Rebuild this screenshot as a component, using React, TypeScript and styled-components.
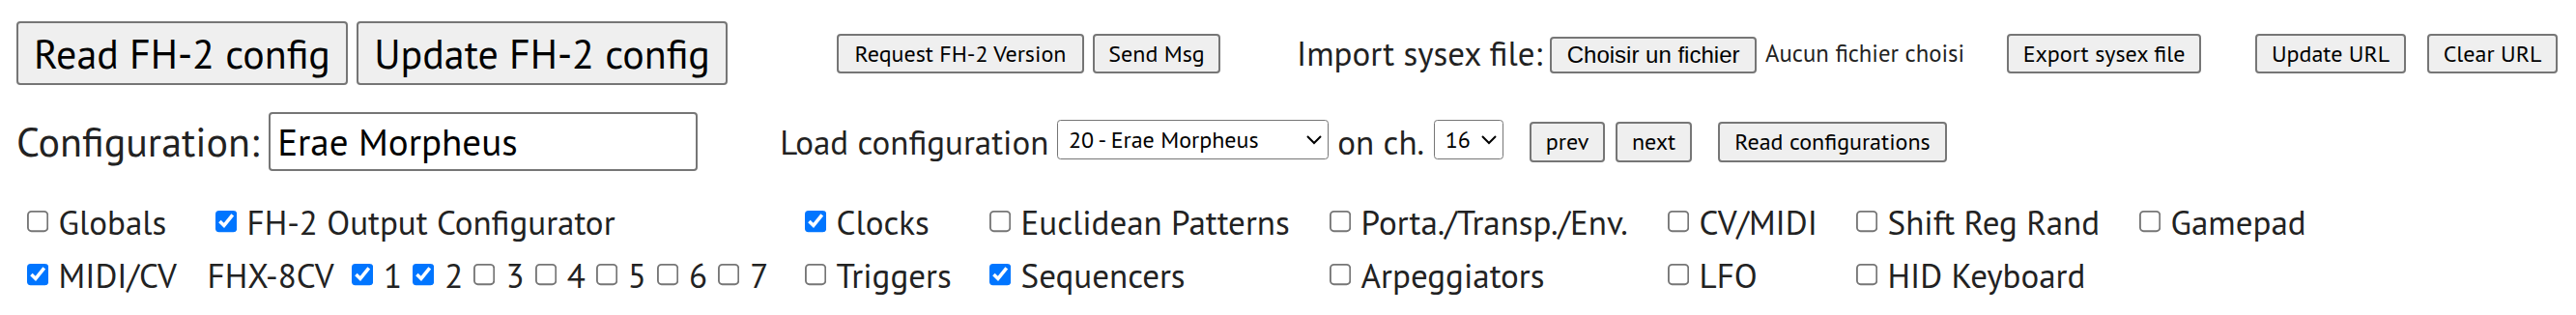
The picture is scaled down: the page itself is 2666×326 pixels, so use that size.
import React from 'react'
import styled, { createGlobalStyle } from 'styled-components'

const Global = createGlobalStyle`
body {
  margin: 0;
  background: #fff;
  color: #222;
  font-family: "PT Sans", Lato, sans-serif;
}
`
const Page = styled.div`
display: flex;
flex-direction: column;
padding: 22px 0 0 17px;
`
const Row = styled.div<{ $h: number; $mt?: number }>`
display: flex;
align-items: center;
height: ${(p) => p.$h}px;
margin-top: ${(p) => p.$mt ?? 0}px;
white-space: nowrap;
`
const Btn = styled.button<{ $w: number; $h: number; $fs: number; $ml?: number }>`
box-sizing: border-box;
flex: none;
width: ${(p) => p.$w}px;
height: ${(p) => p.$h}px;
margin: 0 0 0 ${(p) => p.$ml ?? 0}px;
padding: 0;
font-family: "PT Sans", Lato, sans-serif;
font-size: ${(p) => p.$fs}px;
color: #000;
background: #efefef;
border: 2px solid #767676;
border-radius: 4px;
`
const FileBtn = styled(Btn)`
font-family: "Liberation Sans", Arial, sans-serif;
margin-top: 4px;
`
const Text = styled.span<{ $fs: number; $ml?: number }>`
flex: none;
font-size: ${(p) => p.$fs}px;
margin-left: ${(p) => p.$ml ?? 0}px;
`
const NameInput = styled.input`
box-sizing: border-box;
flex: none;
width: 444px;
height: 61px;
margin-left: 10px;
padding: 0 7px;
font-family: "PT Sans", Lato, sans-serif;
font-size: 39px;
color: #000;
background: #fff;
border: 2px solid #767676;
border-radius: 4px;
`
// native select drawn at the page's 1.8 zoom so the arrow scales with it
const Select = styled.select<{ $w: number; $ml: number }>`
zoom: 1.8;
box-sizing: border-box;
flex: none;
width: ${(p) => p.$w / 1.8}px;
height: ${41 / 1.8}px;
margin: -2px 0 0 ${(p) => p.$ml / 1.8}px;
padding: 0 2px;
font-family: "PT Sans", Lato, sans-serif;
font-size: 13.33px;
color: #000;
background: #fff;
border: 1px solid #767676;
border-radius: 2px;
`
const Modules = styled.div`
display: grid;
grid-template-columns: 195px 610px 191px 352px 350px 195px 293px auto;
grid-auto-rows: 55px;
align-items: center;
margin: 25px 0 0 2.6px;
font-size: 35px;
white-space: nowrap;
`
const Check = styled.label<{ $w?: number }>`
display: flex;
align-items: center;
gap: 9px;
width: ${(p) => (p.$w ? `${p.$w}px` : 'auto')};
flex: none;
`
const Box = styled.input.attrs({ type: 'checkbox' })`
zoom: 1.85;
width: 13px;
height: 13px;
margin: 0 0 0 4.3px;
flex: none;
`
const Inline = styled.div`
display: flex;
align-items: center;
`
const Fhx = styled.span`
width: 141.5px;
flex: none;
`

type Item = { label: string; on?: boolean }

const row1: (Item | null)[] = [
  { label: 'Globals' },
  { label: 'FH-2 Output Configurator', on: true },
  { label: 'Clocks', on: true },
  { label: 'Euclidean Patterns' },
  { label: 'Porta./Transp./Env.' },
  { label: 'CV/MIDI' },
  { label: 'Shift Reg Rand' },
  { label: 'Gamepad' },
]
const row2: (Item | null)[] = [
  { label: 'Triggers' },
  { label: 'Sequencers', on: true },
  { label: 'Arpeggiators' },
  { label: 'LFO' },
  { label: 'HID Keyboard' },
  null,
]
const outputs = [true, true, false, false, false, false, false]

const CheckItem = ({ item }: { item: Item | null }) =>
  item ? (
    <Check>
      <Box defaultChecked={item.on} />
      {item.label}
    </Check>
  ) : (
    <div />
  )

const App = () => {
  return (
    <>
      <Global />
      <Page>
        <Row $h={66}>
          <Btn $w={343} $h={66} $fs={42}>Read FH-2 config</Btn>
          <Btn $w={384} $h={66} $fs={42} $ml={9}>Update FH-2 config</Btn>
          <Btn $w={256} $h={41} $fs={24} $ml={113}>Request FH-2 Version</Btn>
          <Btn $w={132} $h={41} $fs={24} $ml={9}>Send Msg</Btn>
          <Text $fs={35} $ml={79}>Import sysex file:</Text>
          <FileBtn $w={214} $h={38} $fs={24} $ml={8}>Choisir un fichier</FileBtn>
          <Text $fs={24.7} $ml={9}>Aucun fichier choisi</Text>
          <Btn $w={201} $h={41} $fs={24} $ml={44}>Export sysex file</Btn>
          <Btn $w={156} $h={41} $fs={24} $ml={56}>Update URL</Btn>
          <Btn $w={135} $h={41} $fs={24} $ml={22}>Clear URL</Btn>
        </Row>
        <Row $h={61} $mt={28}>
          <Text $fs={42}>Configuration:</Text>
          <NameInput defaultValue="Erae Morpheus" />
          <Text $fs={35} $ml={85}>Load configuration</Text>
          <Select $w={281} $ml={9} defaultValue="20">
            <option value="20">20 - Erae Morpheus</option>
          </Select>
          <Text $fs={35} $ml={9}>on ch.</Text>
          <Select $w={72} $ml={10} defaultValue="16">
            <option value="16">16</option>
          </Select>
          <Btn $w={78} $h={42} $fs={24} $ml={27}>prev</Btn>
          <Btn $w={79} $h={42} $fs={24} $ml={11}>next</Btn>
          <Btn $w={237} $h={42} $fs={24} $ml={27}>Read configurations</Btn>
        </Row>
        <Modules>
          {row1.map((it, i) => (
            <CheckItem key={`a${i}`} item={it} />
          ))}
          <CheckItem item={{ label: 'MIDI/CV', on: true }} />
          <Inline>
            <Fhx>FHX-8CV</Fhx>
            {outputs.map((on, i) => (
              <Check key={i} $w={63.2}>
                <Box defaultChecked={on} />
                {i + 1}
              </Check>
            ))}
          </Inline>
          {row2.map((it, i) => (
            <CheckItem key={`b${i}`} item={it} />
          ))}
        </Modules>
      </Page>
    </>
  )
}

export default App
